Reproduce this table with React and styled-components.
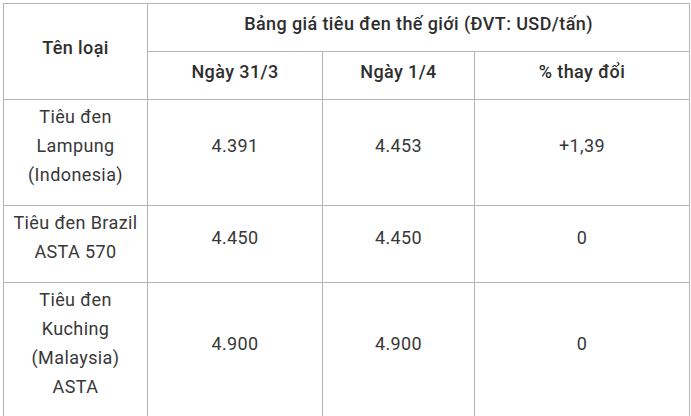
import React from 'react'
import styled, { createGlobalStyle } from 'styled-components'

const rows = [
  { name: ['Tiêu đen', 'Lampung', '(Indonesia)'], d1: '4.391', d2: '4.453', change: '+1,39' },
  { name: ['Tiêu đen Brazil', 'ASTA 570'], d1: '4.450', d2: '4.450', change: '0' },
  { name: ['Tiêu đen', 'Kuching', '(Malaysia)', 'ASTA'], d1: '4.900', d2: '4.900', change: '0' }
]

function App() {
  return (
    <>
      <GlobalStyle />
      <Page>
        <PriceTable>
          <colgroup>
            <col style={{ width: 144 }} />
            <col style={{ width: 175 }} />
            <col style={{ width: 152 }} />
            <col />
          </colgroup>
          <thead>
            <tr>
              <HeadCell rowSpan={2}>Tên loại</HeadCell>
              <HeadCell colSpan={3}>Bảng giá tiêu đen thế giới (ĐVT: USD/tấn)</HeadCell>
            </tr>
            <tr>
              <HeadCell>Ngày 31/3</HeadCell>
              <HeadCell>Ngày 1/4</HeadCell>
              <HeadCell>% thay đổi</HeadCell>
            </tr>
          </thead>
          <tbody>
            {rows.map((row, i) => (
              <tr key={i}>
                <Cell>
                  {row.name.map((line, j) => (
                    <Line key={j}>{line}</Line>
                  ))}
                </Cell>
                <Cell>{row.d1}</Cell>
                <Cell>{row.d2}</Cell>
                <Cell>{row.change}</Cell>
              </tr>
            ))}
          </tbody>
        </PriceTable>
      </Page>
    </>
  )
}

const GlobalStyle = createGlobalStyle`
  html, body {
    margin: 0;
    padding: 0;
    background: #ffffff;
    overflow: hidden;
  }
`

const Page = styled.div`
  padding: 3px 0 0 3px;
  font-family: Roboto, 'Liberation Sans', sans-serif;
  font-size: 18px;
  line-height: 29px;
  letter-spacing: 0.4px;
  color: #383838;
`

const PriceTable = styled.table`
  width: 687px;
  border-collapse: collapse;
  table-layout: fixed;
`

const HeadCell = styled.th`
  border: 1px solid #b4b4b4;
  padding: 5px 4px 13px;
  font-weight: 500;
  text-align: center;
  vertical-align: middle;
  color: #2e2e2e;
`

const Cell = styled.td`
  border: 1px solid #b4b4b4;
  padding: 2px 4px 16px;
  text-align: center;
  vertical-align: middle;
`

const Line = styled.div``

export default App
